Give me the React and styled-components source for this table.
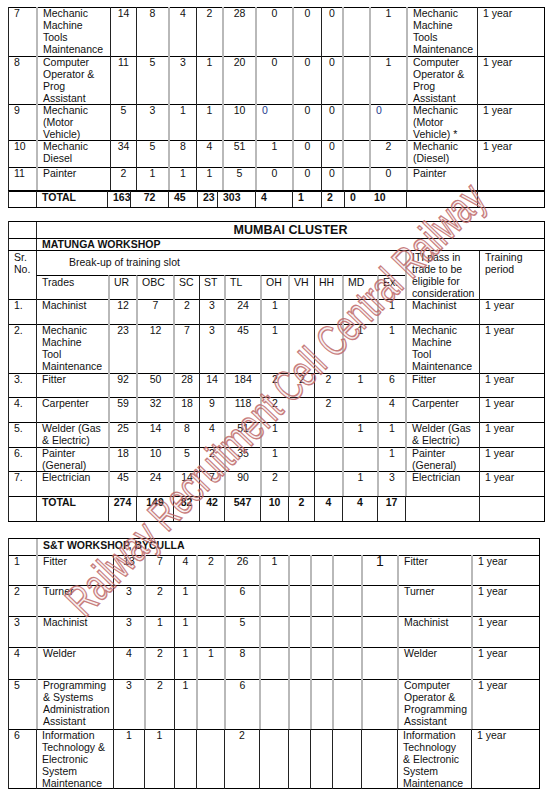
import React from 'react'
import styled, { createGlobalStyle } from 'styled-components'

const GlobalStyle = createGlobalStyle`
  html, body { margin: 0; padding: 0; background: #fff; }
  body {
    font-family: "Liberation Sans", Arial, sans-serif;
    color: #111;
  }
`

const Page = styled.div`
  position: relative;
  width: 547px;
  height: 792px;
  overflow: hidden;
  padding: 7px 0 0 8px;
  box-sizing: border-box;
`

const Table = styled.div`
  width: fit-content;
  margin-top: ${p => p.$gap || 0}px;
  border-right: 1px solid #000;
  border-bottom: 1px solid #000;
`

const Row = styled.div`
  display: grid;
  grid-template-columns: ${p => p.$cols};
  height: ${p => p.$h}px;
  box-sizing: border-box;
  border-top: ${p => (p.$thick ? 2 : 1)}px solid #000;
`

const lineStyle = l =>
  l === 'g' ? '2px solid #b9b9b9' : l === 'n' ? 'none' : '1px solid #222'

const Cell = styled.div`
  box-sizing: border-box;
  min-width: 0;
  margin-top: -1px;
  border-left: ${p => lineStyle(p.$line)};
  padding: ${p => (p.$align === 'center' ? '0 1px' : '0 2px 0 5px')};
  text-align: ${p => p.$align};
  font-size: ${p => (p.$big ? 14 : 10.5)}px;
  line-height: 12px;
  font-weight: ${p => (p.$bold ? 700 : 400)};
  color: ${p => (p.$blue ? '#1d3a8e' : '#111')};
  white-space: pre;
`

const TitleCell = styled(Cell)`
  margin-top: 0;
  font-size: ${p => p.$fs || 10.5}px;
  font-weight: 700;
  line-height: ${p => p.$lh || 12}px;
  padding-top: ${p => p.$pt || 0}px;
`

const HeadGrid = styled.div`
  display: grid;
  grid-template-columns: ${p => p.$cols};
  grid-template-rows: 24px 24px;
  border-top: 1px solid #000;
`

const HeadCell = styled(Cell)`
  margin-top: 0;
  grid-column: ${p => p.$col};
  grid-row: ${p => p.$row};
  border-top: ${p => (p.$top ? '1px solid #000' : 'none')};
  padding-top: ${p => p.$pt || 0}px;
  padding-left: ${p => p.$pl || 5}px;
  text-align: left;
`

const Watermark = styled.div`
  position: absolute;
  left: 276px;
  top: 400px;
  transform: translate(-50%, -50%) rotate(-46deg) scale(0.85, 1.2);
  font-family: "Liberation Sans", Arial, sans-serif;
  font-size: 37px;
  white-space: nowrap;
  color: rgba(205, 140, 140, 0.15);
  -webkit-text-stroke: 1.3px rgba(190, 105, 105, 0.85);
  pointer-events: none;
`

const tpl = w => w.map(x => x + 'px').join(' ')
const TEXT_COLS = [0, 1, 12, 13]

function DataRow({ widths, lines, h, cells, thick, bold, dark, align }) {
  return (
    <Row $cols={tpl(widths)} $h={h} $thick={thick}>
      {cells.map((c, i) => {
        const v = typeof c === 'object' ? c : { t: c }
        const a = v.align || align || (TEXT_COLS.includes(i) ? 'left' : 'center')
        return (
          <Cell
            key={i}
            $line={dark ? 'b' : lines[i]}
            $align={a}
            $bold={bold}
            $blue={v.blue}
            $big={v.big}
          >
            {v.t}
          </Cell>
        )
      })}
    </Row>
  )
}

// upper block (continued from previous page)
const W1 = [28, 74, 26, 32, 28, 26, 33, 37, 29, 21, 27, 37, 71, 67]
const L1 = ['b', 'g', 'b', 'b', 'g', 'b', 'g', 'g', 'g', 'b', 'g', 'g', 'g', 'b']
const W1T = [28, 71, 23, 38, 29, 20, 38, 37, 29, 23, 25, 37, 71, 67]
const L1T = ['b', 'b', 'b', 'b', 'b', 'b', 'b', 'b', 'b', 'b', 'b', 'n', 'b', 'b']
const blue0 = { t: '0', align: 'left', blue: true }

const rows1 = [
  { h: 49, c: ['7', 'Mechanic\nMachine\nTools\nMaintenance', '14', '8', '4', '2', '28', '0', '0', '0', '', '1', 'Mechanic\nMachine\nTools\nMaintenance', '1 year'] },
  { h: 48, c: ['8', 'Computer\nOperator &\nProg\nAssistant', '11', '5', '3', '1', '20', '0', '0', '0', '', '1', 'Computer\nOperator &\nProg\nAssistant', '1 year'] },
  { h: 36, c: ['9', 'Mechanic\n(Motor\nVehicle)', '5', '3', '1', '1', '10', blue0, '0', '0', '', blue0, 'Mechanic\n(Motor\nVehicle) *', '1 year'] },
  { h: 27, c: ['10', 'Mechanic\nDiesel', '34', '5', '8', '4', '51', '1', '0', '0', '', '2', 'Mechanic\n(Diesel)', '1 year'] },
  { h: 23, c: ['11', 'Painter', '2', '1', '1', '1', '5', '0', '0', '0', '', '0', 'Painter', ''] },
]
const total1 = ['', 'TOTAL', '163', { t: '72', align: 'center' }, '45', '23', '303', '4', '1', '2', '0', '10', '', '']

// Mumbai cluster, Matunga
const W2 = [28, 72, 28, 37, 26, 25, 36, 28, 26, 28, 35, 28, 74, 65]
const L2 = ['b', 'b', 'g', 'g', 'g', 'b', 'g', 'g', 'g', 'b', 'g', 'g', 'g', 'b']
const heads2 = ['Trades', 'UR', 'OBC', 'SC', 'ST', 'TL', 'OH', 'VH', 'HH', 'MD', 'Ex.']

const rows2 = [
  { h: 25, c: ['1.', 'Machinist', '12', '7', '2', '3', '24', '1', '', '', '', '1', 'Machinist', '1 year'] },
  { h: 49, c: ['2.', 'Mechanic\nMachine\nTool\nMaintenance', '23', '12', '7', '3', '45', '1', '', '', '1', '1', 'Mechanic\nMachine\nTool\nMaintenance', '1 year'] },
  { h: 24, c: ['3.', 'Fitter', '92', '50', '28', '14', '184', '2', '2', '2', '1', '6', 'Fitter', '1 year'] },
  { h: 25, c: ['4.', 'Carpenter', '59', '32', '18', '9', '118', '2', '', '2', '', '4', 'Carpenter', '1 year'] },
  { h: 25, c: ['5.', 'Welder (Gas\n& Electric)', '25', '14', '8', '4', '51', '1', '', '', '1', '1', 'Welder (Gas\n& Electric)', '1 year'] },
  { h: 24, c: ['6.', 'Painter\n(General)', '18', '10', '5', '2', '35', '1', '', '', '', '1', 'Painter\n(General)', '1 year'] },
  { h: 25, c: ['7.', 'Electrician', '45', '24', '14', '7', '90', '2', '', '', '1', '3', 'Electrician', '1 year'] },
]
const total2 = ['', 'TOTAL', '274', '149', '82', '42', '547', '10', '2', '4', '4', '17', '', '']

// S&T workshop, Byculla
const W3 = [28, 77, 31, 30, 22, 28, 35, 29, 22, 22, 29, 36, 74, 68]
const L3 = ['b', 'g', 'b', 'g', 'b', 'g', 'g', 'g', 'g', 'g', 'g', 'g', 'g', 'g']
const e6 = ['', '', '', '', '']

const rows3 = [
  { h: 30, c: ['1', 'Fitter', '13', '7', '4', '2', '26', '1', '', '', '', { t: '1', big: true }, 'Fitter', '1 year'] },
  { h: 31, c: ['2', 'Turner', '3', '2', '1', '', '6', ...e6, 'Turner', '1 year'] },
  { h: 31, c: ['3', 'Machinist', '3', '1', '1', '', '5', ...e6, 'Machinist', '1 year'] },
  { h: 32, c: ['4', 'Welder', '4', '2', '1', '1', '8', ...e6, 'Welder', '1 year'] },
  { h: 50, c: ['5', 'Programming\n& Systems\nAdministration\nAssistant', '3', '2', '1', '', '6', ...e6, 'Computer\nOperator &\nProgramming\nAssistant', '1 year'] },
  { h: 59, dark: true, c: ['6', 'Information\nTechnology &\nElectronic\nSystem\nMaintenance', '1', '1', '', '', '2', ...e6, 'Information\nTechnology\n& Electronic\nSystem\nMaintenance', '1 year'] },
]

const sum = w => w.reduce((a, b) => a + b, 0)

export default function App() {
  return (
    <Page>
      <GlobalStyle />

      <Table>
        {rows1.map((r, i) => (
          <DataRow key={i} widths={W1} lines={L1} h={r.h} cells={r.c} />
        ))}
        <DataRow widths={W1T} lines={L1T} h={17} cells={total1} thick bold align="left" />
      </Table>

      <Table $gap={13}>
        <Row $cols={tpl([28, sum(W2) - 28])} $h={17}>
          <Cell $line="b" />
          <TitleCell $line="b" $align="center" $fs={12.5} $lh={15} $pt={1}>MUMBAI CLUSTER</TitleCell>
        </Row>
        <Row $cols={tpl([28, sum(W2) - 28])} $h={12}>
          <Cell $line="b" />
          <TitleCell $line="b" $align="left" $lh={11}>MATUNGA WORKSHOP</TitleCell>
        </Row>
        <HeadGrid $cols={tpl(W2)}>
          <HeadCell $line="b" $col="1" $row="1 / 3">{'Sr.\nNo.'}</HeadCell>
          <HeadCell $line="b" $col="2 / 13" $row="1" $pt={5} $pl={32}>Break-up of training slot</HeadCell>
          <HeadCell $line="g" $col="13" $row="1 / 3">{'ITI pass in\ntrade to be\neligible for\nconsideration'}</HeadCell>
          <HeadCell $line="b" $col="14" $row="1 / 3">{'Training\nperiod'}</HeadCell>
          {heads2.map((h, i) => (
            <HeadCell key={h} $line={i === 0 ? 'b' : L2[i + 1]} $col={String(i + 2)} $row="2" $top $pl={i === 0 ? 5 : 4}>
              {h}
            </HeadCell>
          ))}
        </HeadGrid>
        {rows2.map((r, i) => (
          <DataRow key={i} widths={W2} lines={L2} h={r.h} cells={r.c} />
        ))}
        <DataRow widths={W2} lines={L2.map(() => 'b')} h={25} cells={total2} bold />
      </Table>

      <Table $gap={16}>
        <Row $cols={tpl([28, sum(W3) - 28])} $h={17}>
          <Cell $line="b" />
          <TitleCell $line="g" $align="left" $lh={13} $pt={0}>S&amp;T WORKSHOP, BYCULLA</TitleCell>
        </Row>
        {rows3.map((r, i) => (
          <DataRow key={i} widths={W3} lines={L3} h={r.h} cells={r.c} dark={r.dark} />
        ))}
      </Table>

      <Watermark>Railway Recruitment Cell Central Railway</Watermark>
    </Page>
  )
}
